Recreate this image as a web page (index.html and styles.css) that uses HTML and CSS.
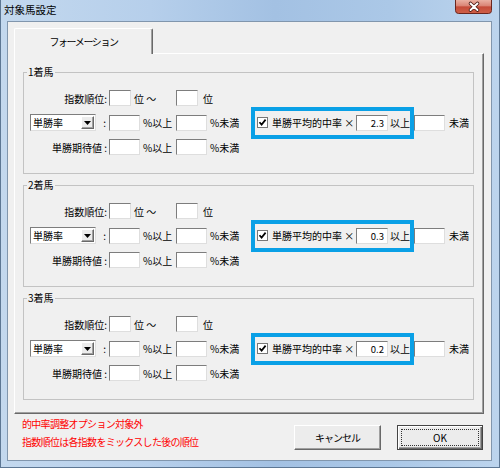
FILE: index.html
```html
<!DOCTYPE html>
<html lang="ja">
<head>
<meta charset="utf-8">
<title>対象馬設定</title>
<link rel="stylesheet" href="styles.css">
</head>
<body>
<div class="window">
  <div class="titlebar">
    <span class="title">対象馬設定</span>
    <svg class="close" width="37" height="14" viewBox="0 0 37 14">
      <defs>
        <linearGradient id="cg" x1="0" y1="0" x2="0" y2="1">
          <stop offset="0" stop-color="#eab0a2"/>
          <stop offset="0.45" stop-color="#d98373"/>
          <stop offset="0.5" stop-color="#c54b38"/>
          <stop offset="1" stop-color="#cf6048"/>
        </linearGradient>
      </defs>
      <path d="M0.5 0 V10.5 Q0.5 13.5 3.5 13.5 H33.5 Q36.5 13.5 36.5 10.5 V0" fill="url(#cg)" stroke="#6a261e"/>
      <path d="M15.5 3.5 L22.5 10 M22.5 3.5 L15.5 10" stroke="#4a1a14" stroke-width="3.6" stroke-linecap="round"/>
      <path d="M15.5 3.5 L22.5 10 M22.5 3.5 L15.5 10" stroke="#fff" stroke-width="1.9" stroke-linecap="round"/>
    </svg>
  </div>
  <div class="client">
    <div class="tabs"><div class="tab">フォーメーション</div></div>
    <div class="panel">

      <fieldset class="group">
        <legend>1着馬</legend>
        <div class="row">
          <div class="c1">指数順位:</div>
          <div class="c2"><input class="tb narrow" type="text"><span class="t3">位 ～</span></div>
          <div class="c3"><input class="tb narrow" type="text"><span class="t5">位</span></div>
        </div>
        <div class="row">
          <div class="c1 split">
            <div class="combo"><span>単勝率</span><span class="drop"><svg width="7" height="4" viewBox="0 0 7 4"><path d="M0 0 H7 L3.5 4 Z" fill="#000"/></svg></span></div>
            <span>:</span>
          </div>
          <div class="c2"><input class="tb" type="text"><span class="t3">%以上</span></div>
          <div class="c3"><input class="tb" type="text"><span class="t3">%未満</span></div>
          <div class="hl">
            <span class="chk"><svg width="9" height="9" viewBox="0 0 9 9"><path d="M1.5 4.2 L3.6 6.6 L7.6 1.6" fill="none" stroke="#000" stroke-width="1.7"/></svg></span>
            <span class="hl-label">単勝平均的中率 ×</span>
            <input class="tb rate" type="text" value="2.3">
            <span class="hl-tail">以上</span>
          </div>
          <input class="tb" type="text"><span class="t4">未満</span>
        </div>
        <div class="row">
          <div class="c1">単勝期待値 :</div>
          <div class="c2"><input class="tb" type="text"><span class="t3">%以上</span></div>
          <div class="c3"><input class="tb" type="text"><span class="t3">%未満</span></div>
        </div>
      </fieldset>

      <fieldset class="group">
        <legend>2着馬</legend>
        <div class="row">
          <div class="c1">指数順位:</div>
          <div class="c2"><input class="tb narrow" type="text"><span class="t3">位 ～</span></div>
          <div class="c3"><input class="tb narrow" type="text"><span class="t5">位</span></div>
        </div>
        <div class="row">
          <div class="c1 split">
            <div class="combo"><span>単勝率</span><span class="drop"><svg width="7" height="4" viewBox="0 0 7 4"><path d="M0 0 H7 L3.5 4 Z" fill="#000"/></svg></span></div>
            <span>:</span>
          </div>
          <div class="c2"><input class="tb" type="text"><span class="t3">%以上</span></div>
          <div class="c3"><input class="tb" type="text"><span class="t3">%未満</span></div>
          <div class="hl">
            <span class="chk"><svg width="9" height="9" viewBox="0 0 9 9"><path d="M1.5 4.2 L3.6 6.6 L7.6 1.6" fill="none" stroke="#000" stroke-width="1.7"/></svg></span>
            <span class="hl-label">単勝平均的中率 ×</span>
            <input class="tb rate" type="text" value="0.3">
            <span class="hl-tail">以上</span>
          </div>
          <input class="tb" type="text"><span class="t4">未満</span>
        </div>
        <div class="row">
          <div class="c1">単勝期待値 :</div>
          <div class="c2"><input class="tb" type="text"><span class="t3">%以上</span></div>
          <div class="c3"><input class="tb" type="text"><span class="t3">%未満</span></div>
        </div>
      </fieldset>

      <fieldset class="group">
        <legend>3着馬</legend>
        <div class="row">
          <div class="c1">指数順位:</div>
          <div class="c2"><input class="tb narrow" type="text"><span class="t3">位 ～</span></div>
          <div class="c3"><input class="tb narrow" type="text"><span class="t5">位</span></div>
        </div>
        <div class="row">
          <div class="c1 split">
            <div class="combo"><span>単勝率</span><span class="drop"><svg width="7" height="4" viewBox="0 0 7 4"><path d="M0 0 H7 L3.5 4 Z" fill="#000"/></svg></span></div>
            <span>:</span>
          </div>
          <div class="c2"><input class="tb" type="text"><span class="t3">%以上</span></div>
          <div class="c3"><input class="tb" type="text"><span class="t3">%未満</span></div>
          <div class="hl">
            <span class="chk"><svg width="9" height="9" viewBox="0 0 9 9"><path d="M1.5 4.2 L3.6 6.6 L7.6 1.6" fill="none" stroke="#000" stroke-width="1.7"/></svg></span>
            <span class="hl-label">単勝平均的中率 ×</span>
            <input class="tb rate" type="text" value="0.2">
            <span class="hl-tail">以上</span>
          </div>
          <input class="tb" type="text"><span class="t4">未満</span>
        </div>
        <div class="row">
          <div class="c1">単勝期待値 :</div>
          <div class="c2"><input class="tb" type="text"><span class="t3">%以上</span></div>
          <div class="c3"><input class="tb" type="text"><span class="t3">%未満</span></div>
        </div>
      </fieldset>

    </div>
    <div class="footer">
      <div class="notes">
        <div>的中率調整オプション対象外</div>
        <div>指数順位は各指数をミックスした後の順位</div>
      </div>
      <div class="buttons">
        <div class="btn cancel"><span>キャンセル</span></div>
        <div class="btn default"><span class="focus">OK</span></div>
      </div>
    </div>
  </div>
</div>
</body>
</html>
```

FILE: styles.css
```css
* { box-sizing: border-box; }
html, body { margin: 0; padding: 0; }
body {
  width: 500px;
  height: 468px;
  overflow: hidden;
  font-family: "Noto Sans CJK JP", "Noto Sans", sans-serif;
  font-size: 10px;
  color: #000;
  background: #b9d1ea;
}

.window {
  width: 500px;
  height: 468px;
  display: flex;
  flex-direction: column;
  border: 1px solid #5d7794;
  border-top: 0;
  background: linear-gradient(to right, #c3d8ee 0%, #b6cfeb 30%, #a3c1e3 55%, #abc8e7 78%, #bcd4ed 100%);
}

.titlebar {
  height: 21px;
  flex: none;
  display: flex;
  justify-content: space-between;
  align-items: flex-start;
  padding: 0 7px 0 3px;
}
.title {
  font-size: 10.5px;
  line-height: 19px;
  color: #000;
}
.close { display: block; }

.client {
  flex: 1;
  margin: 0 7px 6px 6px;
  border: 1px solid #8196ad;
  background: #f0f0f0;
  display: flex;
  flex-direction: column;
}

.tabs {
  display: flex;
  margin: 6px 7px 0 6px;
}
.tab {
  position: relative;
  z-index: 1;
  width: 139px;
  height: 26px;
  margin-bottom: -1px;
  background: #f0f0f0;
  border: 1px solid;
  border-color: #fff #696969 transparent #fff;
  border-bottom: 0;
  border-radius: 2px 2px 0 0;
  box-shadow: inset -1px 0 #a0a0a0;
  display: flex;
  align-items: center;
  justify-content: center;
  letter-spacing: -1.4px;
}

.panel {
  margin: 0 7px 0 6px;
  border: 1px solid;
  border-color: #fff #696969 #696969 #fff;
  box-shadow: inset -1px -1px #a0a0a0;
  padding: 12px 9px 13px 8px;
}

.group {
  margin: 0;
  min-width: 0;
  border: 1px solid #c3c3c3;
  padding: 11px 0 17px 6px;
}
.group + .group { margin-top: 5px; }
.group legend {
  margin-left: -3px;
  padding: 0 1px;
  font-size: 10px;
  line-height: 12px;
}

.row {
  display: flex;
  align-items: center;
  height: 18px;
  white-space: nowrap;
}
.row + .row { margin-top: 6.5px; }

.c1 {
  width: 77px;
  flex: none;
  display: flex;
  justify-content: flex-end;
  align-items: center;
}
.c1.split {
  justify-content: space-between;
  padding-right: 1px;
}
.c2 {
  width: 67px;
  margin-left: 2px;
  flex: none;
  display: flex;
  align-items: center;
}
.c3 {
  width: 75px;
  flex: none;
  display: flex;
  align-items: center;
}
.t3 { margin-left: 3px; }
.t4 { margin-left: 4px; }
.t5 { margin-left: 5px; }

.tb {
  width: 31px;
  height: 16px;
  flex: none;
  margin: 0;
  padding: 0 2px;
  font: inherit;
  font-size: 9.5px;
  background: #fff;
  border: 1px solid;
  border-color: #7d7d7d #dedede #dedede #7d7d7d;
  outline: none;
}
.tb.narrow { width: 22px; }
.tb.rate {
  width: 32px;
  text-align: right;
  padding-right: 3px;
}

.combo {
  width: 66px;
  height: 17px;
  flex: none;
  display: flex;
  align-items: center;
  justify-content: space-between;
  background: #fff;
  border: 1px solid;
  border-color: #7d7d7d #dedede #dedede #7d7d7d;
  padding: 0 1px 0 2px;
}
.drop {
  width: 13px;
  height: 13px;
  display: flex;
  align-items: center;
  justify-content: center;
  background: #ececec;
  border: 1px solid;
  border-color: #fff #696969 #696969 #fff;
  box-shadow: inset -1px -1px #a0a0a0;
}
.drop svg { display: block; }

.hl {
  width: 163px;
  height: 32px;
  flex: none;
  display: flex;
  align-items: center;
  border: 4px solid #0aa0e6;
  padding-left: 2px;
}
.chk {
  width: 11px;
  height: 11px;
  flex: none;
  display: flex;
  align-items: center;
  justify-content: center;
  background: #fff;
  border: 1px solid #777;
}
.chk svg { display: block; }
.hl-label {
  flex: 1;
  margin-left: 4px;
}
.hl-tail {
  margin-left: 2px;
  width: 20px;
}

.footer {
  flex: 1;
  display: flex;
  justify-content: space-between;
  padding: 1px 8px 0 14px;
}
.notes {
  color: #f00;
  line-height: 18px;
  letter-spacing: -0.7px;
}
.buttons {
  display: flex;
  gap: 16px;
  margin-top: 10px;
}
.btn {
  height: 25px;
  display: flex;
  align-items: center;
  justify-content: center;
  background: #ececec;
  border: 1px solid;
  border-color: #fff #696969 #696969 #fff;
  box-shadow: inset -1px -1px #a0a0a0;
}
.btn.cancel {
  width: 87px;
  letter-spacing: -1px;
}
.btn.default {
  width: 86px;
  border: 1px solid #444;
  box-shadow: inset 1px 1px #fff, inset -1px -1px #696969, inset -2px -2px #a0a0a0;
  align-items: stretch;
  padding: 3px;
}
.focus {
  flex: 1;
  display: flex;
  align-items: center;
  justify-content: center;
  border: 1px dotted #333;
}
```
